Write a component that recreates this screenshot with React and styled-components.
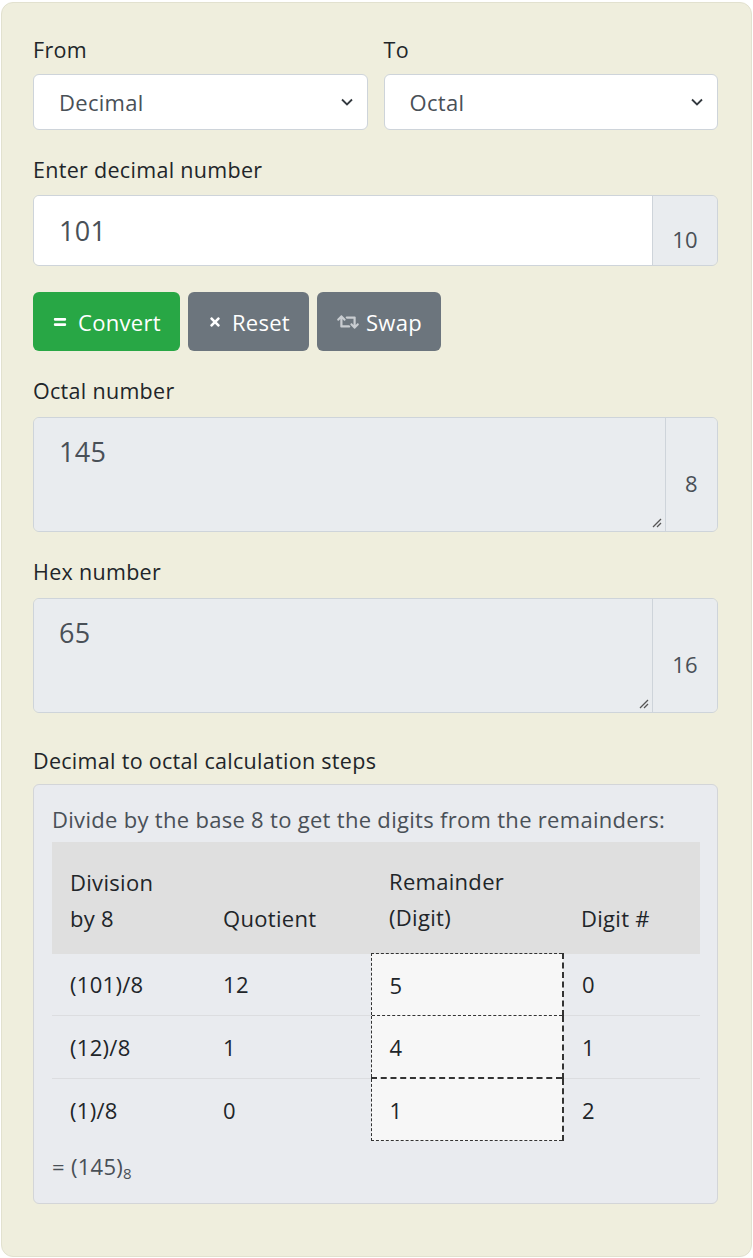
import React from "react"
import styled, { createGlobalStyle } from "styled-components"
import { FaRetweet, FaTimes, FaEquals } from "react-icons/fa"

const GlobalStyle = createGlobalStyle`
  body {
    margin: 0;
    background: #ffffff;
    font-family: "Open Sans", "Liberation Sans", sans-serif;
    letter-spacing: 0.3px;
    color: #212529;
  }
`

const Page = styled.div`
  padding: 2px 1px 2px 1px;
`

const Card = styled.div`
  background: #efeedd;
  border: 1px solid #e2e1cf;
  border-radius: 12px;
  padding: 32px 33px 52px 31px;
`

const Label = styled.div`
  font-size: 21.5px;
  line-height: 30px;
  margin-bottom: ${p => p.mb || 10}px;
`

const Row = styled.div`
  display: grid;
  grid-template-columns: 1fr 1fr;
  gap: 16px;
  margin-bottom: 25px;
`

const SelectBox = styled.div`
  position: relative;
  height: 56px;
  background: #ffffff;
  border: 1px solid #ced4da;
  border-radius: 6px;
  display: flex;
  align-items: center;
  padding: 0 14px 0 25px;
  font-size: 22px;
  color: #495057;
  box-sizing: border-box;
  justify-content: space-between;
`

const Chevron = () => (
  <svg width="12" height="8" viewBox="0 0 12 8">
    <polyline points="1,1.5 6,6.5 11,1.5" fill="none" stroke="#343a40" strokeWidth="1.8" />
  </svg>
)

const Group = styled.div`
  display: flex;
  border: 1px solid #ced4da;
  border-radius: 6px;
  overflow: hidden;
  margin-bottom: ${p => p.mb || 25}px;
  height: ${p => p.h}px;
  box-sizing: border-box;
`

const Field = styled.div`
  flex: 1;
  background: ${p => (p.readOnly ? "#e9ecef" : "#ffffff")};
  font-size: 27px;
  color: #495057;
  padding: ${p => (p.multi ? "14px 25px" : "0 25px")};
  display: flex;
  align-items: ${p => (p.multi ? "flex-start" : "center")};
  line-height: 40px;
  position: relative;
`

const Grip = styled.svg`
  position: absolute;
  right: 3px;
  bottom: 3px;
`

const Addon = styled.div`
  background: #e9ecef;
  border-left: 1px solid #ced4da;
  padding: 17px 19px 0;
  display: flex;
  align-items: center;
  font-size: 22px;
  color: #495057;
`

const Buttons = styled.div`
  display: flex;
  gap: 8px;
  margin-bottom: 25px;
`

const Button = styled.button`
  height: 59px;
  border: none;
  border-radius: 6px;
  padding: 0 19px 0 20px;
  background: ${p => (p.green ? "#28a745" : "#6c757d")};
  color: #ffffff;
  font-family: inherit;
  letter-spacing: inherit;
  font-size: 22px;
  display: flex;
  align-items: center;
  gap: ${p => p.gap || 10}px;
  svg {
    color: ${p => p.iconColor || "#ffffff"};
  }
`

const Steps = styled.div`
  background: #e9ebef;
  border: 1px solid #d3d5d8;
  border-radius: 6px;
  padding: 19px 17px 15px 18px;
  color: #495057;
  font-size: 22px;
`

const Intro = styled.div`
  line-height: 30px;
  margin-bottom: 8px;
`

const Table = styled.table`
  width: 100%;
  border-collapse: collapse;
  color: #212529;
  font-size: 22px;
`

const Th = styled.th`
  background: #dfdfdf;
  font-weight: normal;
  text-align: left;
  vertical-align: bottom;
  line-height: 36px;
  padding: 21px 18px 18px;
`

const Td = styled.td`
  height: 61px;
  padding: 0 18px;
  line-height: 30px;
  border-top: ${p => (p.first ? "none" : "1px solid #dcdde0")};
`

const Mark = styled(Td)`
  background: #f7f7f7;
  border: 1px dashed #333;
  border-right: 2px dashed #333;
  border-top: ${p => (p.thick ? "2px" : "1px")} dashed #333;
`

const Result = styled.div`
  margin-top: 10px;
  line-height: 30px;
  sub {
    font-size: 15px;
    vertical-align: -4px;
  }
`

const rows = [
  ["(101)/8", "12", "5", "0"],
  ["(12)/8", "1", "4", "1"],
  ["(1)/8", "0", "1", "2"],
]

const ResizeGrip = () => (
  <Grip width="10" height="10" viewBox="0 0 10 10">
    <line x1="1" y1="9" x2="9" y2="1" stroke="#555" strokeWidth="1.2" />
    <line x1="5" y1="9" x2="9" y2="5" stroke="#555" strokeWidth="1.2" />
  </Grip>
)

export default function App() {
  return (
    <Page>
      <GlobalStyle />
      <Card>
        <Row>
          <div>
            <Label mb={9}>From</Label>
            <SelectBox>
              Decimal <Chevron />
            </SelectBox>
          </div>
          <div>
            <Label mb={9}>To</Label>
            <SelectBox>
              Octal <Chevron />
            </SelectBox>
          </div>
        </Row>

        <Label>Enter decimal number</Label>
        <Group h={71} mb={26}>
          <Field>101</Field>
          <Addon>10</Addon>
        </Group>

        <Buttons>
          <Button green gap={11}>
            <FaEquals size={14} /> Convert
          </Button>
          <Button>
            <FaTimes size={14} /> Reset
          </Button>
          <Button iconColor="#c9cdd1" gap={7}>
            <FaRetweet size={22} /> Swap
          </Button>
        </Buttons>

        <Label mb={11}>Octal number</Label>
        <Group h={115}>
          <Field readOnly multi>
            145
            <ResizeGrip />
          </Field>
          <Addon>8</Addon>
        </Group>

        <Label mb={11}>Hex number</Label>
        <Group h={115} mb={33}>
          <Field readOnly multi>
            65
            <ResizeGrip />
          </Field>
          <Addon>16</Addon>
        </Group>

        <Label mb={8}>Decimal to octal calculation steps</Label>
        <Steps>
          <Intro>Divide by the base 8 to get the digits from the remainders:</Intro>
          <Table>
            <colgroup>
              <col style={{ width: 153 }} />
              <col style={{ width: 166 }} />
              <col style={{ width: 192 }} />
              <col />
            </colgroup>
            <thead>
              <tr>
                <Th>
                  Division
                  <br />
                  by 8
                </Th>
                <Th>Quotient</Th>
                <Th>
                  Remainder
                  <br />
                  (Digit)
                </Th>
                <Th>Digit #</Th>
              </tr>
            </thead>
            <tbody>
              {rows.map((r, i) => (
                <tr key={i}>
                  <Td first={i === 0}>{r[0]}</Td>
                  <Td first={i === 0}>{r[1]}</Td>
                  <Mark thick={i === 2}>{r[2]}</Mark>
                  <Td first={i === 0}>{r[3]}</Td>
                </tr>
              ))}
            </tbody>
          </Table>
          <Result>
            = (145)<sub>8</sub>
          </Result>
        </Steps>
      </Card>
    </Page>
  )
}
